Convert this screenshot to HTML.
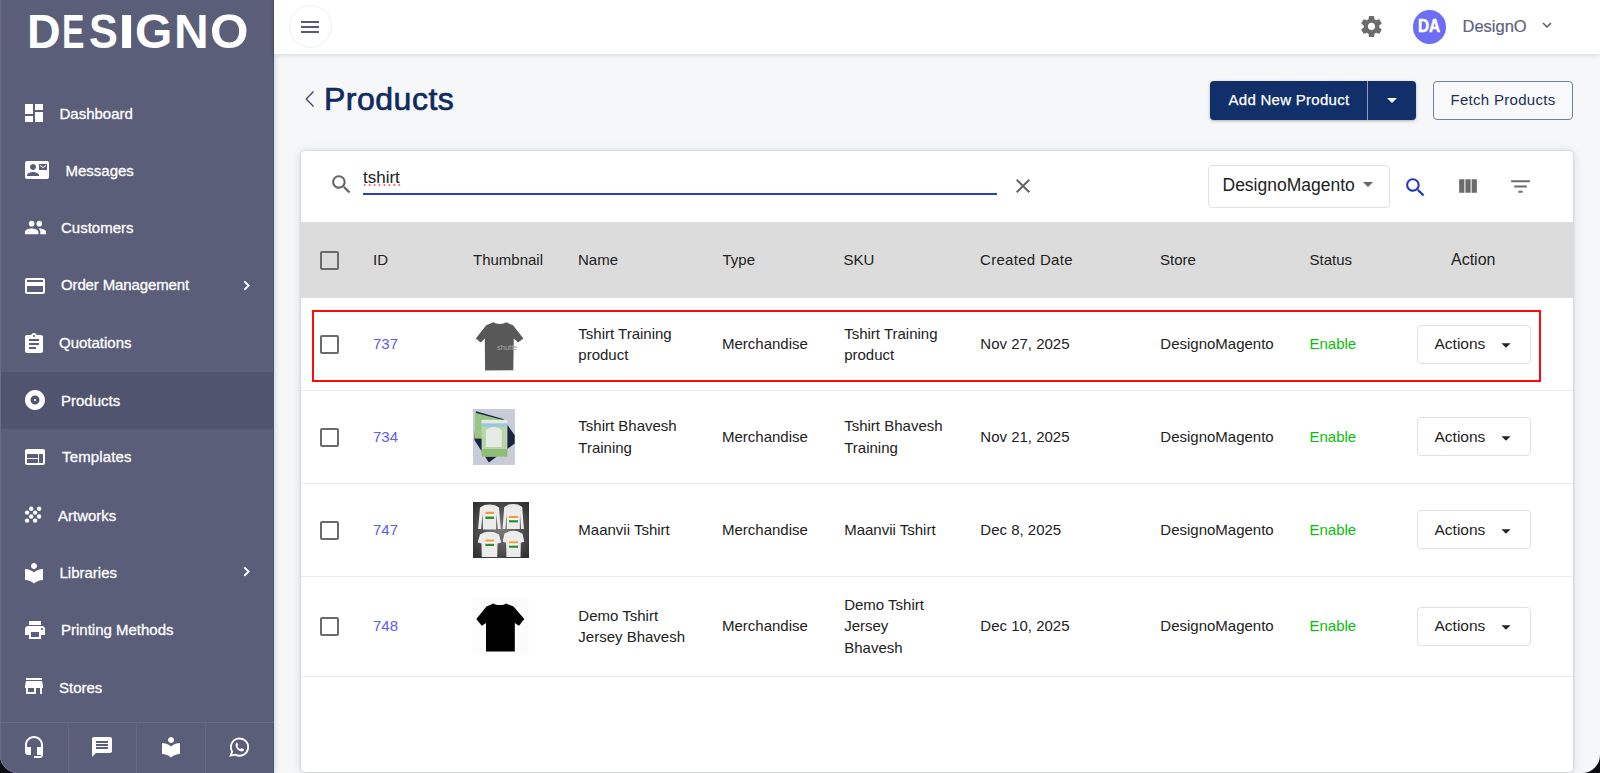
<!DOCTYPE html>
<html><head><meta charset="utf-8">
<style>
*{box-sizing:border-box;margin:0;padding:0}
html,body{width:1600px;height:773px;overflow:hidden;background:#0a0d12}
body{font-family:"Liberation Sans",sans-serif;position:relative}
.a{position:absolute;white-space:nowrap}
#win{position:absolute;left:0;top:0;width:1600px;height:773px;background:#f6f7f9;border-radius:0 0 18px 18px;overflow:hidden}
#side{position:absolute;left:0;top:0;width:274px;height:773px;background:#5a5e79;border-right:1px solid #4c5273;box-shadow:1px 0 5px rgba(0,0,0,.14);z-index:2}
.logo span{position:absolute;top:4px;font:bold 48px/55px "Liberation Sans",sans-serif;color:#fff;transform-origin:0 0}
.mt{position:absolute;font-size:15px;line-height:17px;color:#fff;white-space:nowrap;-webkit-text-stroke:0.3px #fff}
svg.i{position:absolute;fill:#fff;overflow:visible}
#active{position:absolute;left:0;top:372px;width:274px;height:57px;background:#50546e}
#bbar{position:absolute;left:0;top:722px;width:274px;height:51px;border-top:1px solid #666a85}
#bbar .d{position:absolute;top:0;width:1px;height:51px;background:#63678a}
#hdr{position:absolute;left:274px;top:0;width:1326px;height:54px;background:#fff;z-index:3;box-shadow:0 1px 5px rgba(0,0,0,.13)}
#card{position:absolute;left:301px;top:151px;width:1272px;height:621px;background:#fff;border-radius:4px;box-shadow:0 0 2.5px rgba(0,0,0,.22),0 1px 12px rgba(0,0,0,.12)}
.th{position:absolute;top:0;font-size:15px;line-height:17px;color:#222}
.cb{position:absolute;width:19px;height:19px;border:2px solid #6b6b6b;border-radius:2px}
.td{position:absolute;font-size:15px;line-height:21.43px;color:#222;white-space:nowrap}
.id{color:#5b5cf0}
.en{color:#06bf06}
.act{position:absolute;left:1116px;width:114px;height:39px;border:1px solid #e0e0e0;border-radius:4px;background:#fff}
.act span{position:absolute;left:16.5px;top:9.5px;font-size:15.5px;line-height:17px;color:#222}
.act svg{position:absolute;left:77px;top:8.3px}
.line{position:absolute;left:0;width:1272px;height:1px;background:#ebebeb}
</style></head><body>
<div id="win">
<div id="side">
  <div class="logo">
    <span style="left:27px;transform:scaleX(0.97)">D</span><span style="left:62px;transform:scaleX(0.7)">E</span><span style="left:89px;transform:scaleX(0.9)">S</span><span style="left:118px;transform:scaleX(1.29)">I</span><span style="left:135px">G</span><span style="left:174px">N</span><span style="left:210px;transform:scaleX(1.03)">O</span>
  </div>
  <div id="active"></div>
  <div class="a" style="left:0;top:0;width:1px;height:773px;background:#696d87"></div>
  <!-- Dashboard -->
  <svg class="i" style="left:22px;top:101px" width="24" height="24" viewBox="0 0 24 24"><path d="M3 13h8V3H3v10zm0 8h8v-6H3v6zm10 0h8V11h-8v10zm0-18v6h8V3h-8z"/></svg>
  <div class="mt" style="left:59.5px;top:105px">Dashboard</div>
  <!-- Messages -->
  <svg class="i" style="left:25px;top:158px" width="24" height="24" viewBox="0 0 24 24"><path d="M21 8V7l-3 2-3-2v1l3 2 3-2zm1-5H2C.9 3 0 3.9 0 5v14c0 1.1.9 2 2 2h20c1.1 0 1.99-.9 1.99-2L24 5c0-1.1-.9-2-2-2zM8 6c1.66 0 3 1.34 3 3s-1.34 3-3 3-3-1.34-3-3 1.34-3 3-3zm6 12H2v-1c0-2 4-3.1 6-3.1s6 1.1 6 3.1v1zm8-6h-8V6h8v6z"/></svg>
  <div class="mt" style="left:65.5px;top:162px">Messages</div>
  <!-- Customers -->
  <svg class="i" style="left:24px;top:216px" width="23" height="23" viewBox="0 0 24 24"><path d="M16 11c1.66 0 2.99-1.34 2.99-3S17.66 5 16 5c-1.66 0-3 1.34-3 3s1.34 3 3 3zm-8 0c1.66 0 2.99-1.34 2.99-3S9.66 5 8 5C6.34 5 5 6.34 5 8s1.34 3 3 3zm0 2c-2.33 0-7 1.17-7 3.5V19h14v-2.5c0-2.33-4.67-3.5-7-3.5zm8 0c-.29 0-.62.02-.97.05 1.16.84 1.97 1.97 1.97 3.45V19h6v-2.5c0-2.330-4.67-3.5-7-3.5z"/></svg>
  <div class="mt" style="left:61px;top:219px">Customers</div>
  <!-- Order Management -->
  <svg class="i" style="left:23px;top:273.5px" width="24" height="24" viewBox="0 0 24 24"><path d="M20 4H4c-1.11 0-1.99.89-1.99 2L2 18c0 1.11.89 2 2 2h16c1.11 0 2-.89 2-2V6c0-1.11-.89-2-2-2zm0 14H4v-6h16v6zm0-10H4V6h16v2z"/></svg>
  <div class="mt" style="left:61px;top:276px;letter-spacing:-0.13px">Order Management</div>
  <svg class="i" style="left:239.5px;top:279px" width="14" height="14" viewBox="0 0 14 14"><path d="M4.3 2.4L8.6 6.6 4.3 10.8" fill="none" stroke="#fff" stroke-width="1.9"/></svg>
  <!-- Quotations -->
  <svg class="i" style="left:22px;top:331.8px" width="24" height="24" viewBox="0 0 24 24"><path d="M19 3h-4.18C14.4 1.84 13.3 1 12 1c-1.3 0-2.4.84-2.82 2H5c-1.1 0-2 .9-2 2v14c0 1.1.9 2 2 2h14c1.1 0 2-.9 2-2V5c0-1.1-.9-2-2-2zm-7 0c.55 0 1 .45 1 1s-.45 1-1 1-1-.45-1-1 .45-1 1-1zm2 14H7v-2h7v2zm3-4H7v-2h10v2zm0-4H7V7h10v2z"/></svg>
  <div class="mt" style="left:59px;top:334px">Quotations</div>
  <!-- Products -->
  <svg class="i" style="left:23px;top:387.5px" width="24" height="24" viewBox="0 0 24 24"><path d="M12 2C6.48 2 2 6.48 2 12s4.48 10 10 10 10-4.48 10-10S17.52 2 12 2zm0 14.5c-2.49 0-4.5-2.01-4.5-4.5S9.51 7.5 12 7.5s4.5 2.01 4.5 4.5-2.01 4.5-4.5 4.5zm0-5.5c-.55 0-1 .45-1 1s.45 1 1 1 1-.45 1-1-.45-1-1-1z"/></svg>
  <div class="mt" style="left:61px;top:391.5px">Products</div>
  <!-- Templates -->
  <svg class="i" style="left:23px;top:444.8px" width="24" height="24" viewBox="0 0 24 24"><path d="M20 4H4c-1.1 0-1.99.9-1.99 2L2 18c0 1.1.9 2 2 2h16c1.1 0 2-.9 2-2V6c0-1.1-.9-2-2-2zm-5 14H4v-4h11v4zm0-5H4V9h11v4zm5 5h-4V9h4v9z"/></svg>
  <div class="mt" style="left:62px;top:448px;letter-spacing:0.15px">Templates</div>
  <!-- Artworks -->
  <svg class="i" style="left:25px;top:506px" width="17" height="17" viewBox="0 0 17 17"><circle cx="6.2" cy="2.7" r="2.2"/><circle cx="14.1" cy="2.7" r="2.2"/><circle cx="2.1" cy="6.6" r="2.2"/><circle cx="10.1" cy="6.6" r="2.2"/><circle cx="6.2" cy="10.5" r="2.2"/><circle cx="14.1" cy="10.5" r="2.2"/><circle cx="2.1" cy="14.6" r="2.2"/><circle cx="10.1" cy="14.6" r="2.2"/></svg>
  <div class="mt" style="left:58px;top:506.5px">Artworks</div>
  <!-- Libraries -->
  <svg class="i" style="left:22px;top:560.5px" width="24" height="24" viewBox="0 0 24 24"><path d="M12 11.55C9.64 9.35 6.48 8 3 8v11c3.48 0 6.64 1.35 9 3.55 2.36-2.19 5.52-3.55 9-3.55V8c-3.48 0-6.64 1.35-9 3.55zM12 8c1.66 0 3-1.34 3-3s-1.34-3-3-3-3 1.34-3 3 1.34 3 3 3z"/></svg>
  <div class="mt" style="left:59.5px;top:564px">Libraries</div>
  <svg class="i" style="left:239.5px;top:564.8px" width="14" height="14" viewBox="0 0 14 14"><path d="M4.3 2.4L8.6 6.6 4.3 10.8" fill="none" stroke="#fff" stroke-width="1.9"/></svg>
  <!-- Printing Methods -->
  <svg class="i" style="left:23px;top:617.9px" width="24" height="24" viewBox="0 0 24 24"><path d="M19 8H5c-1.66 0-3 1.34-3 3v6h4v4h12v-4h4v-6c0-1.66-1.34-3-3-3zm-3 11H8v-5h8v5zm3-7c-.55 0-1-.45-1-1s.45-1 1-1 1 .45 1 1-.45 1-1 1zm-1-9H6v4h12V3z"/></svg>
  <div class="mt" style="left:61px;top:621px">Printing Methods</div>
  <!-- Stores -->
  <svg class="i" style="left:22px;top:673.8px" width="24" height="24" viewBox="0 0 24 24"><path d="M20 4H4v2h16V4zm1 10v-2l-1-5H4l-1 5v2h1v6h10v-6h4v6h2v-6h1zm-9 4H6v-4h6v4z"/></svg>
  <div class="mt" style="left:59px;top:678.5px">Stores</div>
  <!-- bottom bar -->
  <div id="bbar">
    <div class="d" style="left:68px"></div><div class="d" style="left:136px"></div><div class="d" style="left:205px"></div>
  </div>
  <svg class="i" style="left:22px;top:734.6px" width="24" height="24" viewBox="0 0 24 24"><path d="M12 1c-4.97 0-9 4.03-9 9v7c0 1.66 1.34 3 3 3h3v-8H5v-2c0-3.87 3.13-7 7-7s7 3.13 7 7v2h-4v8h4v1h-7v2h6c1.66 0 3-1.34 3-3V10c0-4.97-4.03-9-9-9z"/></svg>
  <svg class="i" style="left:90.4px;top:734.6px" width="24" height="24" viewBox="0 0 24 24"><path d="M20 2H4c-1.1 0-1.99.9-1.99 2L2 22l4-4h14c1.1 0 2-.9 2-2V4c0-1.1-.9-2-2-2zm-2 12H6v-2h12v2zm0-3H6V9h12v2zm0-3H6V6h12v2z"/></svg>
  <svg class="i" style="left:158.6px;top:735px" width="24" height="24" viewBox="0 0 24 24"><path d="M12 11.55C9.64 9.35 6.48 8 3 8v11c3.48 0 6.64 1.35 9 3.55 2.36-2.19 5.52-3.55 9-3.55V8c-3.48 0-6.64 1.35-9 3.55zM12 8c1.66 0 3-1.34 3-3s-1.34-3-3-3-3 1.34-3 3 1.34 3 3 3z"/></svg>
  <svg class="i" style="left:229px;top:736.5px" width="21" height="20" viewBox="0 0 21 20"><path fill="none" stroke="#fff" stroke-width="1.8" d="M3.2 14.6A8.6 8.6 0 1 1 6.3 17.6L1.6 18.6Z"/><path d="M7.3 5.6c.4-.2.8-.2 1 .2l.9 2c.1.3 0 .6-.2.8l-.6.6c.6 1.2 1.6 2.2 2.8 2.8l.6-.6c.2-.2.5-.3.8-.2l2 .9c.4.2.5.6.3 1-.4.8-1.2 1.4-2.1 1.3-3.3-.4-5.8-3-6.2-6.2-.1-.9.4-1.8 1.2-2.1z"/></svg>
</div>

<div id="hdr">
  <div class="a" style="left:15px;top:5px;width:43px;height:43px;border:1px solid #eceef3;border-radius:50%"></div>
  <svg class="a" style="left:24px;top:15px" width="24" height="24" viewBox="0 0 24 24" fill="#555a78"><path d="M3 18h18v-2H3v2zm0-5h18v-2H3v2zm0-7v2h18V6H3z"/></svg>
  <svg class="a" style="left:1085.3px;top:14.1px" width="25" height="25" viewBox="0 0 24 24" fill="#6b6b6b"><path d="M19.43 12.98c.04-.32.07-.64.07-.98s-.03-.66-.07-.98l2.11-1.65c.19-.15.24-.42.12-.64l-2-3.46c-.12-.22-.39-.3-.61-.22l-2.49 1c-.52-.4-1.08-.73-1.69-.98l-.38-2.65C14.46 2.18 14.25 2 14 2h-4c-.25 0-.46.18-.49.42l-.38 2.65c-.61.25-1.17.59-1.69.98l-2.49-1c-.23-.09-.49 0-.61.22l-2 3.46c-.13.22-.07.49.12.64l2.11 1.65c-.04.32-.07.65-.07.98s.03.66.07.98l-2.11 1.65c-.19.15-.24.42-.12.64l2 3.46c.12.22.39.3.61.22l2.49-1c.52.4 1.08.73 1.69.98l.38 2.65c.03.24.24.42.49.42h4c.25 0 .46-.18.49-.42l.38-2.65c.61-.25 1.17-.59 1.69-.98l2.49 1c.23.09.49 0 .61-.22l2-3.46c.12-.22.07-.49-.12-.64l-2.11-1.65zM12 15.5c-1.93 0-3.5-1.57-3.5-3.5s1.57-3.5 3.5-3.5 3.5 1.57 3.5 3.5-1.57 3.5-3.5 3.5z"/></svg>
  <div class="a" style="left:1138.8px;top:10px;width:33.2px;height:33.7px;border-radius:50%;background:#6e6ef2"></div>
  <div class="a" style="left:1143.5px;top:16.3px;font:bold 17.5px/20px 'Liberation Sans',sans-serif;color:#fff;transform:scaleX(0.88);transform-origin:0 0;-webkit-text-stroke:0.5px #fff">DA</div>
  <div class="a" style="left:1188.5px;top:15.5px;font-size:16.5px;line-height:20px;color:#5d6280;-webkit-text-stroke:0.2px #5d6280">DesignO</div>
  <svg class="a" style="left:1264.3px;top:16px" width="18" height="18" viewBox="0 0 24 24" fill="#555a78"><path d="M16.59 8.59L12 13.170 7.41 8.59 6 10l6 6 6-6z"/></svg>
</div>

<!-- page title -->
<svg class="a" style="left:303px;top:88px" width="14" height="22" viewBox="0 0 14 22"><path d="M10.5 3.5L3.2 11l7.3 7.5" fill="none" stroke="#3d4a6e" stroke-width="1.3"/></svg>
<div class="a" style="left:324px;top:81px;font-size:32px;line-height:37px;color:#0f2a5e;letter-spacing:0.5px;-webkit-text-stroke:0.7px #0f2a5e">Products</div>

<div class="a" style="left:1210px;top:81px;width:206px;height:39px;background:#11306a;border-radius:4px;box-shadow:0 1px 3px rgba(0,0,0,.3)"></div>
<div class="a" style="left:1367px;top:81px;width:1px;height:39px;background:#8a9bbd"></div>
<div class="a" style="left:1228.5px;top:91.2px;font-size:15px;line-height:17px;color:#fff;letter-spacing:0.28px;-webkit-text-stroke:0.25px #fff">Add New Product</div>
<svg class="a" style="left:1380px;top:88.3px" width="24" height="24" viewBox="0 0 24 24" fill="#fff"><path d="M7 10l5 5 5-5z"/></svg>

<div class="a" style="left:1433px;top:81px;width:140px;height:39px;border:1px solid #7280a0;border-radius:4px;background:#f8f9fb"></div>
<div class="a" style="left:1450.5px;top:91.3px;font-size:15px;line-height:17px;color:#1d2e58;letter-spacing:0.3px">Fetch Products</div>

<!-- card -->
<div id="card">
  <svg class="a" style="left:28px;top:21px" width="25" height="25" viewBox="0 0 24 24" fill="#666"><path d="M15.5 14h-.79l-.28-.27C15.41 12.59 16 11.110 16 9.5 16 5.91 13.09 3 9.5 3S3 5.91 3 9.5 5.91 16 9.5 16c1.61 0 3.09-.59 4.23-1.57l.27.28v.79l5 4.99L20.49 19l-4.99-5zm-6 0C7.01 14 5 11.99 5 9.5S7.01 5 9.5 5 14 7.01 14 9.5 11.99 14 9.5 14z"/></svg>
  <div class="a" style="left:62px;top:16.5px;font-size:17px;line-height:20px;color:#222">tshirt</div>
  <svg class="a" style="left:62px;top:32.1px" width="40" height="4"><circle cx="1.70" cy="2" r="1.05" fill="#f46464"/><circle cx="6.63" cy="2" r="1.05" fill="#f46464"/><circle cx="11.56" cy="2" r="1.05" fill="#f46464"/><circle cx="16.49" cy="2" r="1.05" fill="#f46464"/><circle cx="21.42" cy="2" r="1.05" fill="#f46464"/><circle cx="26.35" cy="2" r="1.05" fill="#f46464"/><circle cx="31.28" cy="2" r="1.05" fill="#f46464"/><circle cx="36.21" cy="2" r="1.05" fill="#f46464"/></svg>
  <div class="a" style="left:62px;top:42px;width:634px;height:2px;background:#2741b6"></div>
  <svg class="a" style="left:709.5px;top:23px" width="24" height="24" viewBox="0 0 24 24" fill="#666"><path d="M19 6.41L17.59 5 12 10.59 6.41 5 5 6.41 10.59 12 5 17.59 6.41 19 12 13.41 17.59 19 19 17.59 13.41 12z"/></svg>

  <div class="a" style="left:906.5px;top:14px;width:182px;height:43px;border:1px solid #e0e0e0;border-radius:4px"></div>
  <div class="a" style="left:921.5px;top:24px;font-size:17.5px;line-height:20px;color:#222">DesignoMagento</div>
  <svg class="a" style="left:1055px;top:21px" width="24" height="24" viewBox="0 0 24 24" fill="#666"><path d="M7 10l5 5 5-5z"/></svg>
  <svg class="a" style="left:1102px;top:23.5px" width="25" height="25" viewBox="0 0 24 24" fill="#2638b8"><path d="M15.5 14h-.79l-.28-.27C15.41 12.59 16 11.11 16 9.5 16 5.91 13.09 3 9.5 3S3 5.91 3 9.5 5.91 16 9.5 16c1.61 0 3.09-.59 4.23-1.57l.27.28v.79l5 4.99L20.490 19l-4.99-5zm-6 0C7.01 14 5 11.99 5 9.5S7.01 5 9.5 5 14 7.01 14 9.5 11.99 14 9.5 14z"/></svg>
  <svg class="a" style="left:1154px;top:22.5px" width="25" height="25" viewBox="0 0 24 24" fill="#6b6b6b"><path d="M10 18h5V5h-5v13zm-6 0h5V5H4v13zM16 5v13h5V5h-5z"/></svg>
  <svg class="a" style="left:1206.5px;top:22.5px" width="25" height="25" viewBox="0 0 24 24" fill="#6b6b6b"><path d="M10 18h4v-2h-4v2zM3 6v2h18V6H3zm3 7h12v-2H6v2z"/></svg>

  <!-- table header -->
  <div class="a" style="left:0;top:71px;width:1272px;height:76px;background:#dcdcdc"></div>
  <div class="cb" style="left:18.5px;top:99.5px"></div>
  <div class="th" style="left:72px;top:100px">ID</div>
  <div class="th" style="left:172px;top:100px">Thumbnail</div>
  <div class="th" style="left:277px;top:100px">Name</div>
  <div class="th" style="left:421.5px;top:100px">Type</div>
  <div class="th" style="left:542.5px;top:100px">SKU</div>
  <div class="th" style="left:679px;top:100px;letter-spacing:0.3px">Created Date</div>
  <div class="th" style="left:859px;top:100px">Store</div>
  <div class="th" style="left:1008.5px;top:100px">Status</div>
  <div class="th" style="left:1150px;top:99.5px;font-size:16px">Action</div>

  <!-- row 1 -->
  <div class="cb" style="left:18.5px;top:184.2px"></div>
  <div class="td id" style="left:72px;top:182.38px">737</div>
  <svg class="a" style="left:171.5px;top:165px" width="56" height="56" viewBox="0 0 56 56"><path fill="#585858" d="M20.6 6.3 C23 8.4 30.5 8.4 33 6.3 L40 9.2 L50.4 22.6 L45 26.5 L40.8 22.5 L40.3 54.2 L12.1 54.4 L11.8 22.5 L7.7 26.5 L2.8 22.6 L13.2 9.3 Z"/><text x="24" y="33.5" font-size="7.5" fill="#a8a8a8" font-family="Liberation Sans">shutte</text></svg>
  <div class="td" style="left:277.3px;top:171.67px">Tshirt Training<br>product</div>
  <div class="td" style="left:421px;top:182.38px">Merchandise</div>
  <div class="td" style="left:543.2px;top:171.67px">Tshirt Training<br>product</div>
  <div class="td" style="left:679.3px;top:182.38px">Nov 27, 2025</div>
  <div class="td" style="left:859.3px;top:182.38px">DesignoMagento</div>
  <div class="td en" style="left:1008.5px;top:182.38px">Enable</div>
  <div class="act" style="top:173.9px"><span>Actions</span><svg width="22" height="22" viewBox="0 0 24 24" fill="#222"><path d="M7 10l5 5 5-5z"/></svg></div>
  <div class="line" style="top:239px"></div>

  <!-- row 2 -->
  <div class="cb" style="left:18.5px;top:276.8px"></div>
  <div class="td id" style="left:72px;top:274.88px">734</div>
  <svg class="a" style="left:171.7px;top:258px" width="42" height="56" viewBox="0 0 42 56">
    <rect width="42" height="56" fill="#c7ccd8"/>
    <polygon points="3,2.3 30.3,10 41.7,26.3 41.7,34.5 15.8,53.5 1.4,30.9" fill="#1a2444"/>
    <polygon points="2.2,3.8 30,11 30,30 1.6,29.6" fill="#9cc584"/>
    <rect x="8.6" y="10.9" width="25.8" height="36.7" fill="#b9d6a8"/><rect x="8.6" y="10.9" width="25.8" height="3.6" fill="#e2eadf"/>
    <rect x="8.6" y="14.5" width="25.8" height="3.2" fill="#9cc6e6"/>
    <path d="M13 38 V21 Q20.8 15 28.7 21 V38 Z" fill="#e6ebe6"/>
    <rect x="8.6" y="40" width="25.8" height="7.6" fill="#8dbd76"/>
  </svg>
  <div class="td" style="left:277.3px;top:264.17px">Tshirt Bhavesh<br>Training</div>
  <div class="td" style="left:421px;top:274.88px">Merchandise</div>
  <div class="td" style="left:543.2px;top:264.17px">Tshirt Bhavesh<br>Training</div>
  <div class="td" style="left:679.3px;top:274.88px">Nov 21, 2025</div>
  <div class="td" style="left:859.3px;top:274.88px">DesignoMagento</div>
  <div class="td en" style="left:1008.5px;top:274.88px">Enable</div>
  <div class="act" style="top:266.4px"><span>Actions</span><svg width="22" height="22" viewBox="0 0 24 24" fill="#222"><path d="M7 10l5 5 5-5z"/></svg></div>
  <div class="line" style="top:332px"></div>

  <!-- row 3 -->
  <div class="cb" style="left:18.5px;top:369.5px"></div>
  <div class="td id" style="left:72px;top:367.88px">747</div>
  <svg class="a" style="left:172px;top:351px" width="56" height="56" viewBox="0 0 56 56">
    <defs><radialGradient id="g4" cx="0.5" cy="0.5" r="0.7"><stop offset="0" stop-color="#7a7a7a"/><stop offset="1" stop-color="#2c2c2c"/></radialGradient></defs>
    <rect width="56" height="56" fill="url(#g4)"/>
    <path fill="#ececec" d="M11.5 3 Q16.5 1.8 21.5 3 L26 5.5 L27.8 27 L24.8 27 L23.5 12 L23 27.4 L10 27.4 L9.5 12 L8.2 27 L5.1 27 L7 5.5 Z"/>
    <path fill="#ececec" d="M35.5 2.5 Q40.2 1.3 45 2.5 L49.2 5 L50.9 27 L48 27 L47 12 L46.8 27 L33.8 27 L33.5 12 L32.4 27 L29.6 27 L31.2 5 Z"/>
    <path fill="#ececec" d="M11.5 30.3 Q16.5 29 21.5 30.3 L26 32.5 L28.2 40.5 L24.5 41.5 L24.2 55 L8.8 55 L8.5 41.5 L4.7 40.5 L7 32.5 Z"/>
    <path fill="#ececec" d="M35.5 29.4 Q40.4 28 45.3 29.4 L49.5 31.8 L51.3 39.8 L47.8 40.8 L47.5 55 L33.4 55 L33.1 40.8 L29.6 39.8 L31.4 31.8 Z"/>
    <rect x="12.4" y="9.8" width="8.6" height="2.4" fill="#f59a33"/><rect x="12.4" y="12.2" width="8.6" height="2.3" fill="#fafafa"/><rect x="12.4" y="14.5" width="8.6" height="2.5" fill="#2f8f34"/>
    <rect x="36" y="14" width="9" height="2.1" fill="#f59a33"/><rect x="36" y="16.1" width="9" height="2.1" fill="#fafafa"/><rect x="36" y="18.2" width="9" height="2.2" fill="#2f8f34"/>
    <rect x="12.4" y="37.6" width="8.6" height="2.1" fill="#f59a33"/><rect x="12.4" y="39.7" width="8.6" height="2.1" fill="#fafafa"/><rect x="12.4" y="41.8" width="8.6" height="2.2" fill="#2f8f34"/>
    <rect x="36" y="39.4" width="9" height="2.1" fill="#f59a33"/><rect x="36" y="41.5" width="9" height="2.1" fill="#fafafa"/><rect x="36" y="43.6" width="9" height="2.2" fill="#2f8f34"/>
  </svg>
  <div class="td" style="left:277.3px;top:367.88px">Maanvii Tshirt</div>
  <div class="td" style="left:421px;top:367.88px">Merchandise</div>
  <div class="td" style="left:543.2px;top:367.88px">Maanvii Tshirt</div>
  <div class="td" style="left:679.3px;top:367.88px">Dec 8, 2025</div>
  <div class="td" style="left:859.3px;top:367.88px">DesignoMagento</div>
  <div class="td en" style="left:1008.5px;top:367.88px">Enable</div>
  <div class="act" style="top:359.4px"><span>Actions</span><svg width="22" height="22" viewBox="0 0 24 24" fill="#222"><path d="M7 10l5 5 5-5z"/></svg></div>
  <div class="line" style="top:425px"></div>

  <!-- row 4 -->
  <div class="cb" style="left:18.5px;top:466.0px"></div>
  <div class="td id" style="left:72px;top:464.38px">748</div>
  <svg class="a" style="left:172px;top:447px" width="56" height="56" viewBox="0 0 56 56">
    <rect width="56" height="56" fill="#fbfbfb"/>
    <path fill="#000" d="M20.5 5.6 C23 7.6 30.5 7.6 33 5.6 L40.5 8.5 L51.3 21 L46 27.8 L41.8 25 L41.8 53.6 L13 53.6 L13 25 L8.8 27.8 L3.3 21 L13.5 8.5 Z"/>
  </svg>
  <div class="td" style="left:277.3px;top:453.66px">Demo Tshirt<br>Jersey Bhavesh</div>
  <div class="td" style="left:421px;top:464.38px">Merchandise</div>
  <div class="td" style="left:543.2px;top:442.95px">Demo Tshirt<br>Jersey<br>Bhavesh</div>
  <div class="td" style="left:679.3px;top:464.38px">Dec 10, 2025</div>
  <div class="td" style="left:859.3px;top:464.38px">DesignoMagento</div>
  <div class="td en" style="left:1008.5px;top:464.38px">Enable</div>
  <div class="act" style="top:455.9px"><span>Actions</span><svg width="22" height="22" viewBox="0 0 24 24" fill="#222"><path d="M7 10l5 5 5-5z"/></svg></div>
  <div class="line" style="top:525px"></div>
</div>

<!-- red highlight -->
<div class="a" style="left:312px;top:310px;width:1229px;height:72px;border:2px solid #ff0a0a"></div>
</div>
</body></html>
